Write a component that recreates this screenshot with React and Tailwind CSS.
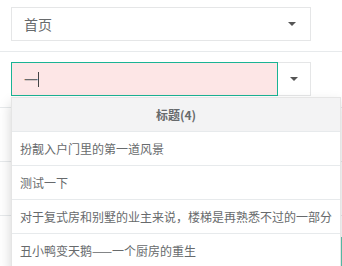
import React from "react";

const cjk = { fontFamily: '"Noto Sans CJK SC", "Noto Sans", sans-serif' };

function Caret() {
  return (
    <span className="inline-block w-0 h-0 border-t-[4px] border-t-[#555] border-x-[4px] border-x-transparent" />
  );
}

const rows = [
  "扮靓入户门里的第一道风景",
  "测试一下",
  "对于复式房和别墅的业主来说，楼梯是再熟悉不过的一部分",
  "丑小鸭变天鹅——一个厨房的重生",
];

export default function App() {
  return (
    <div className="relative w-[342px] h-[266px] overflow-hidden bg-white text-[#676a6c]" style={cjk}>
      {/* first select */}
      <div className="pt-[7px] px-[11px]">
        <div className="w-[300px] h-[34px] border border-[#e5e6e7] flex items-center justify-between pl-[12px] pr-[14px] text-[14px]">
          <span>首页</span>
          <Caret />
        </div>
      </div>
      <div className="mt-[10px] border-t border-[#e7eaec]" />

      {/* search input group */}
      <div className="mt-[10px] px-[11px]">
        <div className="flex w-[300px] h-[34px]">
          <div className="w-[267px] h-full bg-[#fde6e6] border border-[#1ab394] flex items-center pl-[12px] text-[14px]">
            <span>一</span>
            <span className="inline-block w-px h-[15px] bg-[#444]" />
          </div>
          <div className="flex-1 h-full border border-l-0 border-[#e5e6e7] flex items-center justify-center">
            <Caret />
          </div>
        </div>
      </div>

      {/* background form lines */}
      <div className="mt-[11px] border-t border-[#e7eaec]" />
      <div className="h-[54px] border-b border-[#e7eaec]" />
      <div className="h-[54px] border-b border-[#e7eaec]" />
      <div className="mt-[21px] ml-[341px] w-[40px] h-[30px] bg-[#5cc8b0]" />

      {/* autocomplete dropdown */}
      <div className="absolute left-[11px] top-[97px] w-[330px] bg-white border border-black/10 shadow-[0_6px_12px_rgba(0,0,0,0.175)] text-[12px]">
        <div className="h-[34px] bg-[#f3f3f4] border-b border-[#e7eaec] flex items-center justify-center font-bold">
          标题(4)
        </div>
        {rows.map((r) => (
          <div key={r} className="h-[34px] border-b border-[#e7eaec] flex items-center pl-[8px] whitespace-nowrap">
            {r}
          </div>
        ))}
      </div>
    </div>
  );
}
